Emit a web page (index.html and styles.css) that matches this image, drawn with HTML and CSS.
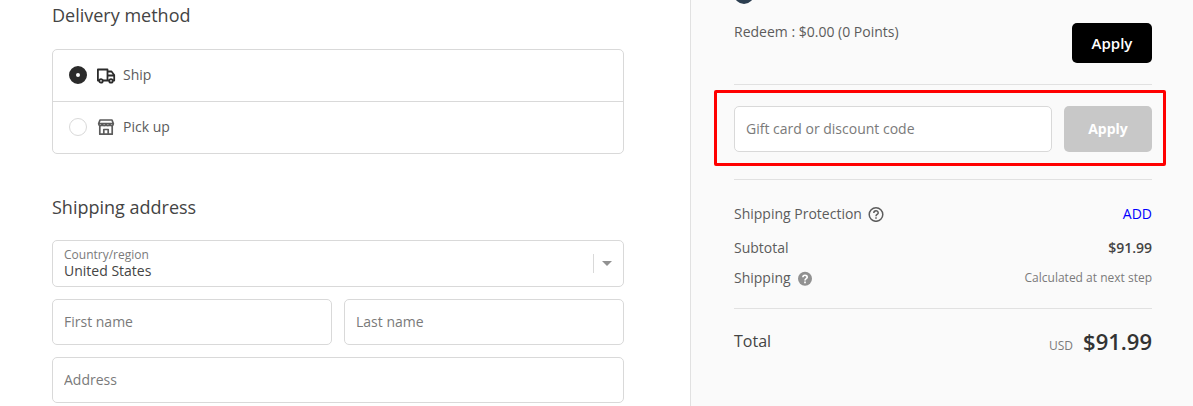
FILE: index.html
```html
<!DOCTYPE html>
<html lang="en">
<head>
<meta charset="utf-8">
<meta name="viewport" content="width=device-width, initial-scale=1">
<title>Checkout</title>
<link rel="stylesheet" href="styles.css">
</head>
<body>
<div class="checkout">
  <main class="main">
    <section>
      <h2 class="heading">Delivery method</h2>
      <div class="methods">
        <label class="method selected">
          <input class="radio" type="radio" name="method" checked>
          <svg class="method-icon" viewBox="0 0 20 20" fill="none" stroke="currentColor" stroke-width="1.8" stroke-linejoin="round" aria-hidden="true">
            <path d="M3 15.500H1.900V4.500H11.500V15.500H7M11.500 6.500H15.500L18.200 10V15.500H17M13 15.500H11.500M11.500 10.500H18.200"/>
            <circle cx="5" cy="15.900" r="1.700"/><circle cx="15" cy="15.900" r="1.700"/>
          </svg>
          <span>Ship</span>
        </label>
        <label class="method">
          <input class="radio" type="radio" name="method">
          <svg class="method-icon" viewBox="0 0 20 20" fill="none" stroke="currentColor" stroke-width="1.700" stroke-linejoin="round" aria-hidden="true">
            <path d="M4 3H16L17.300 6.500V7C17.300 9.200 14 9.200 13.800 7.200C13.500 9.200 10.200 9.200 10 7.200C9.800 9.200 6.500 9.200 6.200 7.200C6 9.200 2.700 9.200 2.700 7V6.500ZM2.700 6.500H17.300M3.800 9V17.200H16.200V9M7.800 17V12.500H12.200V17"/>
          </svg>
          <span>Pick up</span>
        </label>
      </div>
    </section>
    <section class="address">
      <h2 class="heading">Shipping address</h2>
      <div class="fields">
        <div class="select-field">
          <label class="select-label" for="country">Country/region</label>
          <select class="select" id="country"><option>United States</option></select>
          <span class="select-arrow" aria-hidden="true"></span>
        </div>
        <input class="input" type="text" placeholder="First name" aria-label="First name">
        <input class="input" type="text" placeholder="Last name" aria-label="Last name">
        <input class="input wide" type="text" placeholder="Address" aria-label="Address">
      </div>
    </section>
  </main>
  <aside class="summary">
    <section class="points">
      <input class="slider" type="range" min="0" max="100" value="0" aria-label="Points to redeem">
      <div class="redeem">
        <span class="redeem-text">Redeem : $0.00 (0 Points)</span>
        <button class="redeem-button" type="button">Apply</button>
      </div>
    </section>
    <section class="discount">
      <form class="discount-form">
        <input class="input discount-input" type="text" placeholder="Gift card or discount code" aria-label="Gift card or discount code">
        <button class="discount-button" type="submit" disabled>Apply</button>
      </form>
    </section>
    <section class="costs">
      <div class="cost protection">
        <span class="cost-name">Shipping Protection
          <svg class="help" viewBox="0 0 16 16" fill="none" stroke="currentColor" stroke-width="1.500" aria-hidden="true">
            <circle cx="8" cy="8.500" r="6.800"/><path d="M5.800 7C5.800 4 10.200 4 10.200 6.900C10.200 8.500 8 8.400 8 10.200M8 11.200V12.700"/>
          </svg>
        </span>
        <a class="add" href="#">ADD</a>
      </div>
      <div class="cost"><span>Subtotal</span><span class="price">$91.99</span></div>
      <div class="cost">
        <span class="cost-name">Shipping
          <svg class="help filled" viewBox="0 0 16 16" fill="none" aria-hidden="true">
            <circle cx="8" cy="8.800" r="7" fill="currentColor"/><path d="M5.900 7.300C5.900 4.600 10.200 4.600 10.200 7.200C10.200 8.700 8 8.600 8 10.500M8 11.600V13.200" stroke="#fff" stroke-width="1.700"/>
          </svg>
        </span>
        <span class="note">Calculated at next step</span>
      </div>
    </section>
    <section class="total">
      <span class="total-name">Total</span>
      <span class="total-value"><span class="currency">USD</span><strong class="total-price">$91.99</strong></span>
    </section>
  </aside>
</div>
</body>
</html>
```
FILE: styles.css
```css
* {
  box-sizing: border-box;
}

body {
  margin: 0;
  background: #fff;
  color: #5c5c5c;
  font: 14px/20px "Open Sans", sans-serif;
}

input,
select,
button {
  margin: 0;
  font: inherit;
}

.checkout {
  display: grid;
  grid-template-columns: 690fr 503fr;
  min-height: 100vh;
}

.main {
  padding: 3px 66px 3px 52px;
}

.heading {
  margin: 0;
  color: #444;
  font-size: 18px;
  font-weight: 400;
  line-height: 24px;
}

.methods {
  margin-top: 22px;
  border: 1px solid #d9d9d9;
  border-radius: 5px;
}

.method {
  display: flex;
  align-items: center;
  height: 51px;
  padding: 0 16px 1px;
}

.method + .method {
  height: 52px;
  border-top: 1px solid #d9d9d9;
}

.radio {
  appearance: none;
  width: 18px;
  height: 18px;
  border: 1px solid #d9d9d9;
  border-radius: 50%;
  background: #fff;
}

.radio:checked {
  border: 7px solid #2b2b2b;
}

.method-icon {
  width: 20px;
  height: 20px;
  margin: 0 7px 0 9px;
}

.selected .method-icon {
  color: #2b2b2b;
}

.address {
  margin-top: 41px;
}

.fields {
  display: grid;
  grid-template-columns: 1fr 1fr;
  gap: 12px;
  margin-top: 21px;
}

.select-field {
  position: relative;
  grid-column: 1 / -1;
}

.select-label {
  position: absolute;
  top: 7px;
  left: 12px;
  color: #7a7a7a;
  font-size: 12px;
  line-height: 16px;
}

.select {
  appearance: none;
  display: block;
  width: 100%;
  height: 47px;
  padding: 15px 40px 0 11px;
  border: 1px solid #d9d9d9;
  border-radius: 5px;
  background: #fff;
  color: #444;
}

.select-arrow {
  position: absolute;
  top: 14px;
  right: 12px;
  display: flex;
  align-items: center;
  height: 19px;
  padding-left: 8px;
  border-left: 1px solid #d9d9d9;
  pointer-events: none;
}

.select-arrow::after {
  content: "";
  border: 5px solid transparent;
  border-top-color: #919191;
  border-bottom: 0;
}

.input {
  width: 100%;
  height: 46px;
  padding: 0 11px 2px;
  border: 1px solid #d9d9d9;
  border-radius: 5px;
  background: #fff;
  color: #444;
}

.input::placeholder {
  color: #7a7a7a;
  opacity: 1;
}

.wide {
  grid-column: 1 / -1;
}

.summary {
  padding: 0 41px 0 43px;
  border-left: 1px solid #e1e1e1;
  background: #fafafa;
}

.points {
  padding-bottom: 21px;
}

.slider {
  appearance: none;
  display: block;
  width: 100%;
  height: 20px;
  margin-top: -16px;
  background: transparent;
}

.slider::-webkit-slider-thumb {
  appearance: none;
  width: 20px;
  height: 20px;
  border-radius: 50%;
  background: #2c3e50;
}

.redeem {
  display: flex;
  align-items: flex-start;
  justify-content: space-between;
  padding-top: 19px;
}

.redeem-text {
  line-height: 18px;
}

.redeem-button {
  width: 80px;
  height: 40px;
  padding: 0;
  border: 0;
  border-radius: 5px;
  background: #000;
  color: #fff;
  font-size: 15px;
  font-weight: 600;
}

.discount {
  padding: 21px 0 27px;
  border-top: 1px solid #e1e1e1;
  border-bottom: 1px solid #e1e1e1;
}

.discount-form {
  position: relative;
  display: flex;
  gap: 12px;
}

.discount-form::after {
  content: "";
  position: absolute;
  inset: -16px -14px -14px -20px;
  border: 3px solid #f00;
  border-radius: 2px;
  pointer-events: none;
}

.discount-input {
  flex: 1;
  min-width: 0;
}

.discount-button {
  width: 88px;
  padding: 0;
  border: 0;
  border-radius: 5px;
  background: #c8c8c8;
  color: #fff;
  font-weight: 700;
}

.costs {
  padding: 19px 0 15px;
}

.cost {
  display: flex;
  align-items: center;
  justify-content: space-between;
  height: 30px;
}

.protection {
  margin-bottom: 4px;
}

.cost-name {
  display: flex;
  align-items: center;
  gap: 6px;
}

.help {
  width: 16px;
  height: 16px;
}

.filled {
  color: #919191;
}

.add {
  color: #00f;
  text-decoration: none;
}

.price {
  color: #444;
  font-weight: 600;
}

.note {
  color: #7a7a7a;
  font-size: 12px;
}

.total {
  display: flex;
  align-items: center;
  justify-content: space-between;
  padding: 16px 0;
  border-top: 1px solid #e1e1e1;
}

.total-name {
  color: #444;
  font-size: 16px;
}

.total-value {
  display: flex;
  align-items: baseline;
  gap: 10px;
}

.currency {
  color: #7a7a7a;
  font-size: 12px;
}

.total-price {
  color: #333;
  font-size: 22px;
  font-weight: 600;
  line-height: 32px;
}
```
